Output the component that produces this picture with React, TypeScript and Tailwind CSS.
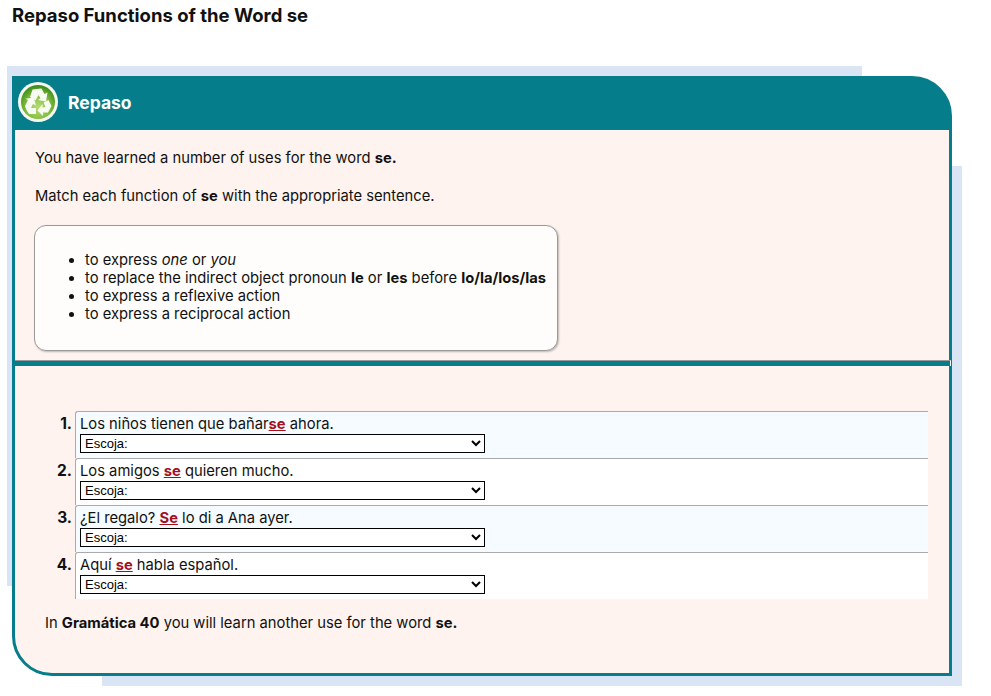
import React from "react";

function Se({ children }: { children: React.ReactNode }) {
  return <span className="font-bold underline text-[#a3101c]">{children}</span>;
}

function RecycleIcon() {
  return (
    <svg viewBox="0 0 40 40" className="h-10 w-10 shrink-0">
      <defs>
        <radialGradient id="g" cx="50%" cy="66%" r="62%">
          <stop offset="0%" stopColor="#b9dd7a" />
          <stop offset="55%" stopColor="#86c040" />
          <stop offset="100%" stopColor="#418f1c" />
        </radialGradient>
      </defs>
      <circle cx="20" cy="20" r="20" fill="#f4f8ef" />
      <circle cx="20" cy="20" r="17" fill="url(#g)" />
      <g fill="#f7fbf2">
        <path d="M14.5 7.5 L23.5 6.5 L26.5 12 L29.5 10.5 L28 19.5 L20 18 L22.5 16.2 L20.5 13 L17.5 18.5 L12 15 Z" />
        <path d="M30.5 18 L33.5 24 L30 30.5 L25 30.5 L25 34 L19.5 28.5 L24.5 22 L24.5 25.5 L27.5 25 L25.5 20.5 Z" />
        <path d="M7 24 L10 18 L7.5 16.8 L15.8 15.5 L18 23.5 L15 22 L13 26 L18 26 L18 32 L11 32 Q8 28.5 7 24 Z" />
      </g>
    </svg>
  );
}

const rows: { n: string; body: React.ReactNode; bg: string }[] = [
  { n: "1.", body: <>Los niños tienen que bañar<Se>se</Se> ahora.</>, bg: "bg-[#f5fbff]" },
  { n: "2.", body: <>Los amigos <Se>se</Se> quieren mucho.</>, bg: "bg-white" },
  { n: "3.", body: <>¿El regalo? <Se>Se</Se> lo di a Ana ayer.</>, bg: "bg-[#f5fbff]" },
  { n: "4.", body: <>Aquí <Se>se</Se> habla español.</>, bg: "bg-white" },
];

export default function App() {
  return (
    <div className="relative h-[696px] w-[991px] overflow-hidden bg-white font-['Inter',sans-serif] text-[14.75px] text-[#111]">
      <h1 className="pl-3 pt-[5px] text-[18.5px] font-bold leading-[20px]">Repaso Functions of the Word se</h1>

      <div className="absolute left-[7px] top-[66px] h-[520px] w-[855px] bg-[#d9e5f5]" />
      <div className="absolute left-[102px] top-[166px] h-[520px] w-[860px] bg-[#d9e5f5]" />

      <section className="relative ml-3 mt-[51px] h-[600px] w-[940px] rounded-bl-[40px] rounded-tr-[40px] border-[3px] border-[#067d8a] bg-[linear-gradient(#067d8a_51px,#fef3ee_51px)]">
        <header className="flex h-[51px] items-center gap-[10px] pb-[5px] pl-[3px]">
          <RecycleIcon />
          <span className="mt-[2px] text-[17.5px] font-bold text-white">Repaso</span>
        </header>

        <div className="px-5 pt-[18px]">
          <p className="leading-[20px]">You have learned a number of uses for the word <b>se.</b></p>
          <p className="mt-[18px] leading-[20px]">Match each function of <b>se</b> with the appropriate sentence.</p>

          <div className="-ml-px mt-[19px] h-[126px] w-[524px] rounded-[12px] border border-[#9a9a9a] bg-[#fffdfb] pl-[50px] pt-[25px] shadow-[1px_1px_2px_rgba(0,0,0,0.25)]">
            <ul className="list-disc leading-[18px]">
              <li>to express <i>one</i> or <i>you</i></li>
              <li>to replace the indirect object pronoun <b>le</b> or <b>les</b> before <b>lo/la/los/las</b></li>
              <li>to express a reflexive action</li>
              <li>to express a reciprocal action</li>
            </ul>
          </div>
        </div>

        <div className="-mr-[2px] mt-[9px] h-[6px] border-r border-t border-r-white border-t-[#999] bg-[#067d8a]" />

        <div className="ml-[14px] mr-[21px] mt-[45px]">
          {rows.map((r) => (
            <div key={r.n} className="flex h-[47px]">
              <div className="w-[46px] pr-[3px] pt-[3px] text-right text-[15.5px] font-bold leading-[20px]">{r.n}</div>
              <div className={`flex-1 rounded-tl-[3px] border-l border-t border-[#aaa] pl-1 pt-[2px] ${r.bg}`}>
                <div className="leading-[20px]">{r.body}</div>
                <select className="block h-[19px] w-[405px] border border-black bg-white font-['Liberation_Sans',sans-serif] text-[13px] text-black">
                  <option>Escoja:</option>
                </select>
              </div>
            </div>
          ))}
        </div>

        <p className="pl-[30px] pt-[14px] leading-[20px]">In <b>Gramática 40</b> you will learn another use for the word <b>se.</b></p>
      </section>
    </div>
  );
}
